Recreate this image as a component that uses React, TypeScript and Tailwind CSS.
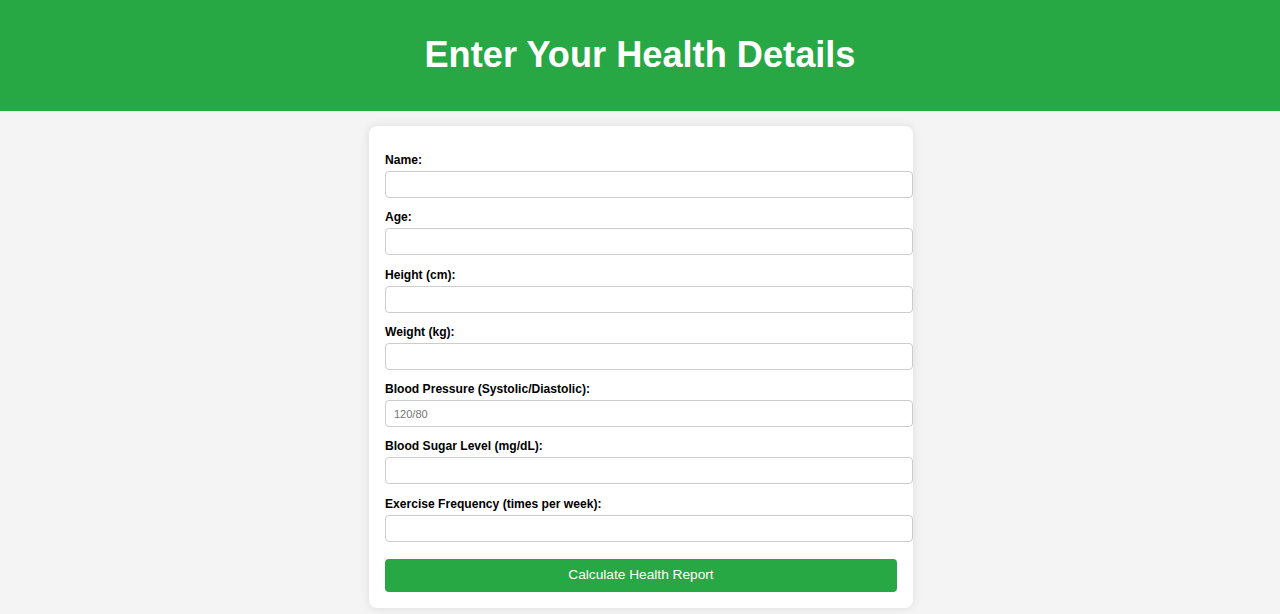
import React from "react";

const fields = [
  { label: "Name:", placeholder: "" },
  { label: "Age:", placeholder: "" },
  { label: "Height (cm):", placeholder: "" },
  { label: "Weight (kg):", placeholder: "" },
  { label: "Blood Pressure (Systolic/Diastolic):", placeholder: "120/80" },
  { label: "Blood Sugar Level (mg/dL):", placeholder: "" },
  { label: "Exercise Frequency (times per week):", placeholder: "" },
];

export default function App() {
  return (
    <div className="min-h-[614px] bg-[#f4f4f4] font-['Liberation_Sans',Arial,sans-serif] text-black">
      <header className="flex h-[111px] items-center justify-center bg-[#28a745] pb-[3px]">
        <h1 className="text-center text-[36.2px] font-bold leading-[41px] text-white">
          Enter Your Health Details
        </h1>
      </header>

      <div className="flex justify-center pl-[2px]">
        <div className="mt-[15px] w-[544px] rounded-lg bg-white px-4 pt-[27px] pb-4 shadow-[0_0_10px_rgba(0,0,0,0.1)]">
          <form className="flex flex-col">
            {fields.map((f, i) => (
              <div key={f.label} className={i === 0 ? "flex flex-col" : "mt-[12.25px] flex flex-col"}>
                <label className="mb-[3px] text-[12.1px] font-bold leading-[15px]">{f.label}</label>
                <input
                  type="text"
                  placeholder={f.placeholder}
                  className="h-[27px] w-[528px] rounded border border-[#ccc] px-2 text-[11px] placeholder:text-[#757575] outline-none"
                />
              </div>
            ))}
            <button
              type="button"
              className="mt-[17px] h-[33px] w-full rounded bg-[#28a745] text-[13.7px] text-white"
            >
              Calculate Health Report
            </button>
          </form>
        </div>
      </div>
    </div>
  );
}
